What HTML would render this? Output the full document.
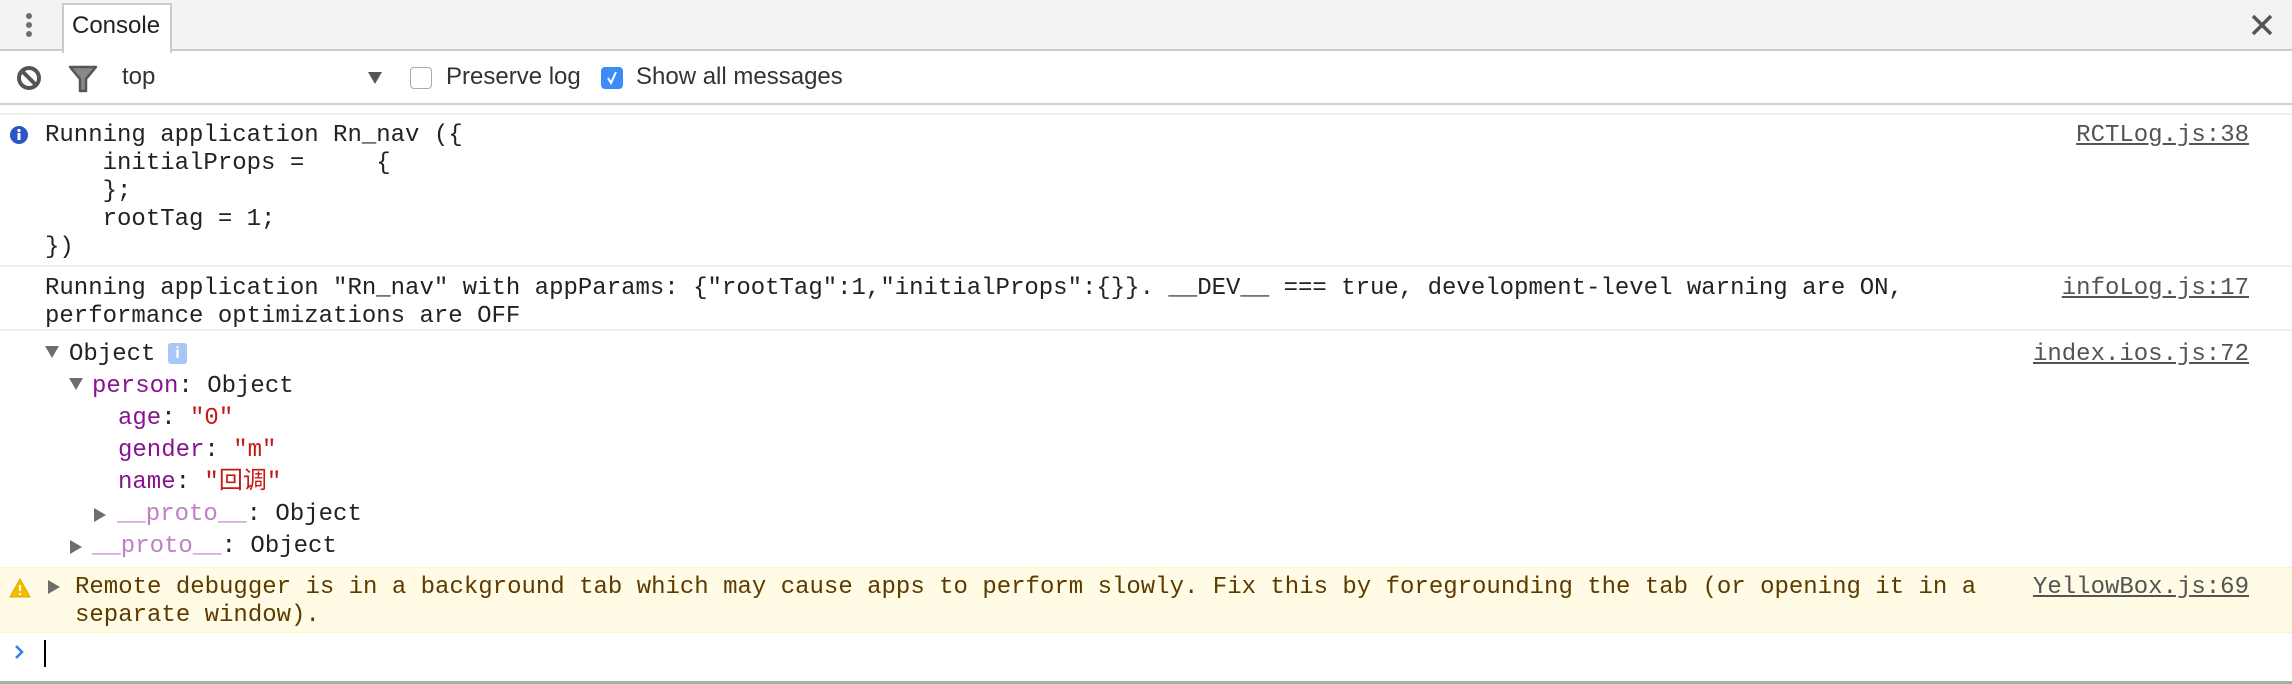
<!DOCTYPE html>
<html><head><meta charset="utf-8"><style>
*{margin:0;padding:0;box-sizing:border-box}
body{width:2292px;height:684px;background:#fff;position:relative;overflow:hidden;font-family:"Liberation Sans",sans-serif}
.abs{position:absolute}
.m{font-family:"Liberation Mono","Noto Sans CJK SC",monospace;font-size:24px;white-space:pre;color:#222;position:absolute;line-height:28px}
.p{color:#881391}.s{color:#c41a16}.pr{color:#c080c8}
.lnk{position:absolute;right:43px;font-family:"Liberation Mono",monospace;font-size:24px;color:#545454;text-decoration:underline;line-height:28px}
.sep{position:absolute;left:0;width:2292px;height:2px;background:#f0f0f0}
.tri{position:absolute;width:0;height:0}
.down{border-left:7px solid transparent;border-right:7px solid transparent;border-top:12px solid #6e6e6e}
.right{border-top:7px solid transparent;border-bottom:7px solid transparent;border-left:12px solid #6e6e6e}
</style></head><body>
<div class="abs" style="left:0;top:0;width:2292px;height:51px;background:#f3f3f3;border-bottom:2px solid #cbcbcb"></div>
<div class="abs" style="left:26px;top:13px;width:6px;height:6px;border-radius:3px;background:#6e6e6e"></div>
<div class="abs" style="left:26px;top:22px;width:6px;height:6px;border-radius:3px;background:#6e6e6e"></div>
<div class="abs" style="left:26px;top:31px;width:6px;height:6px;border-radius:3px;background:#6e6e6e"></div>
<div class="abs" style="left:62px;top:3px;width:110px;height:50px;background:#fff;border:2px solid #cbcbcb;border-bottom:none"></div>
<div class="abs" style="left:72px;top:12px;font-size:24px;color:#222">Console</div>
<svg class="abs" style="left:2250px;top:13px" width="24" height="24"><path d="M3 3L21 21M21 3L3 21" stroke="#555" stroke-width="3.5"/></svg>
<svg class="abs" style="left:16px;top:65px" width="26" height="26"><circle cx="13" cy="13" r="10" fill="none" stroke="#555" stroke-width="4"/><path d="M6 6L20 20" stroke="#555" stroke-width="4"/></svg>
<svg class="abs" style="left:68px;top:64px" width="30" height="30"><path d="M2 3H28L18 15V27H12V15Z" fill="#888" stroke="#555" stroke-width="2.5" stroke-linejoin="round"/></svg>
<div class="abs" style="left:122px;top:63px;font-size:24px;color:#333">top</div>
<div class="tri down" style="left:368px;top:72px;border-top-color:#555"></div>
<div class="abs" style="left:410px;top:67px;width:22px;height:22px;border:1.5px solid #aaa;border-radius:4px;background:#fff"></div>
<div class="abs" style="left:446px;top:63px;font-size:24px;color:#333">Preserve log</div>
<div class="abs" style="left:601px;top:67px;width:22px;height:22px;border-radius:4px;background:#3b8df5"></div>
<svg class="abs" style="left:601px;top:67px" width="22" height="22"><path d="M7 11L10 16L15 5" fill="none" stroke="#fff" stroke-width="2"/></svg>
<div class="abs" style="left:636px;top:63px;font-size:24px;color:#333">Show all messages</div>
<div class="abs" style="left:0;top:103px;width:2292px;height:2px;background:#d0d0d0"></div>
<div class="sep" style="top:113px"></div>
<svg class="abs" style="left:10px;top:126px" width="18" height="18"><circle cx="9" cy="9" r="9" fill="#2c55c8"/><rect x="7.5" y="7" width="3" height="7" fill="#fff"/><circle cx="9" cy="4.5" r="1.6" fill="#fff"/></svg>
<div class="m" style="left:45px;top:122px">Running application Rn_nav ({
    initialProps =     {
    };
    rootTag = 1;
})</div>
<div class="lnk" style="top:122px">RCTLog.js:38</div>
<div class="sep" style="top:265px"></div>
<div class="m" style="left:45px;top:275px">Running application "Rn_nav" with appParams: {"rootTag":1,"initialProps":{}}. __DEV__ === true, development-level warning are ON,
performance optimizations are OFF</div>
<div class="lnk" style="top:275px">infoLog.js:17</div>
<div class="sep" style="top:329px"></div>
<div class="tri down" style="left:45px;top:346px"></div>
<div class="m" style="left:69px;top:339px;line-height:32px">Object</div>
<div class="abs" style="left:168px;top:343px;width:19px;height:21px;background:#a9c6f5;border-radius:3px;color:#fff;font:bold 16px 'Liberation Sans';text-align:center;line-height:21px">i</div>
<div class="lnk" style="top:339px;line-height:32px">index.ios.js:72</div>
<div class="tri down" style="left:69px;top:378px"></div>
<div class="m" style="left:92px;top:371px;line-height:32px"><span class="p">person</span>: Object</div>
<div class="m" style="left:118px;top:403px;line-height:32px"><span class="p">age</span>: <span class="s">"0"</span>
<span class="p">gender</span>: <span class="s">"m"</span>
<span class="p">name</span>: <span class="s">"回调"</span></div>
<div class="tri right" style="left:94px;top:508px"></div>
<div class="m" style="left:117px;top:499px;line-height:32px"><span class="pr">__proto__</span>: Object</div>
<div class="tri right" style="left:70px;top:540px"></div>
<div class="m" style="left:92px;top:531px;line-height:32px"><span class="pr">__proto__</span>: Object</div>
<div class="abs" style="left:0;top:567px;width:2292px;height:66px;background:#fffbe5;border-top:1px solid #fff5c2;border-bottom:1px solid #fff5c2"></div>
<svg class="abs" style="left:9px;top:578px" width="22" height="20"><path d="M11 1L21 19H1Z" fill="#f4bd00" stroke="#e0a800" stroke-width="1" stroke-linejoin="round"/><rect x="10" y="7" width="2" height="6" fill="#fff"/><rect x="10" y="15" width="2" height="2" fill="#fff"/></svg>
<div class="tri right" style="left:48px;top:580px"></div>
<div class="m" style="left:75px;top:574px;color:#5c3b00">Remote debugger is in a background tab which may cause apps to perform slowly. Fix this by foregrounding the tab (or opening it in a
separate window).</div>
<div class="lnk" style="top:574px">YellowBox.js:69</div>
<svg class="abs" style="left:14px;top:644px" width="12" height="16"><path d="M2 2L8 8L2 14" fill="none" stroke="#367cf1" stroke-width="2.5"/></svg>
<div class="abs" style="left:44px;top:640px;width:2px;height:27px;background:#000"></div>
<div class="abs" style="left:0;top:681px;width:2292px;height:3px;background:#9fb59f"></div>
</body></html>
